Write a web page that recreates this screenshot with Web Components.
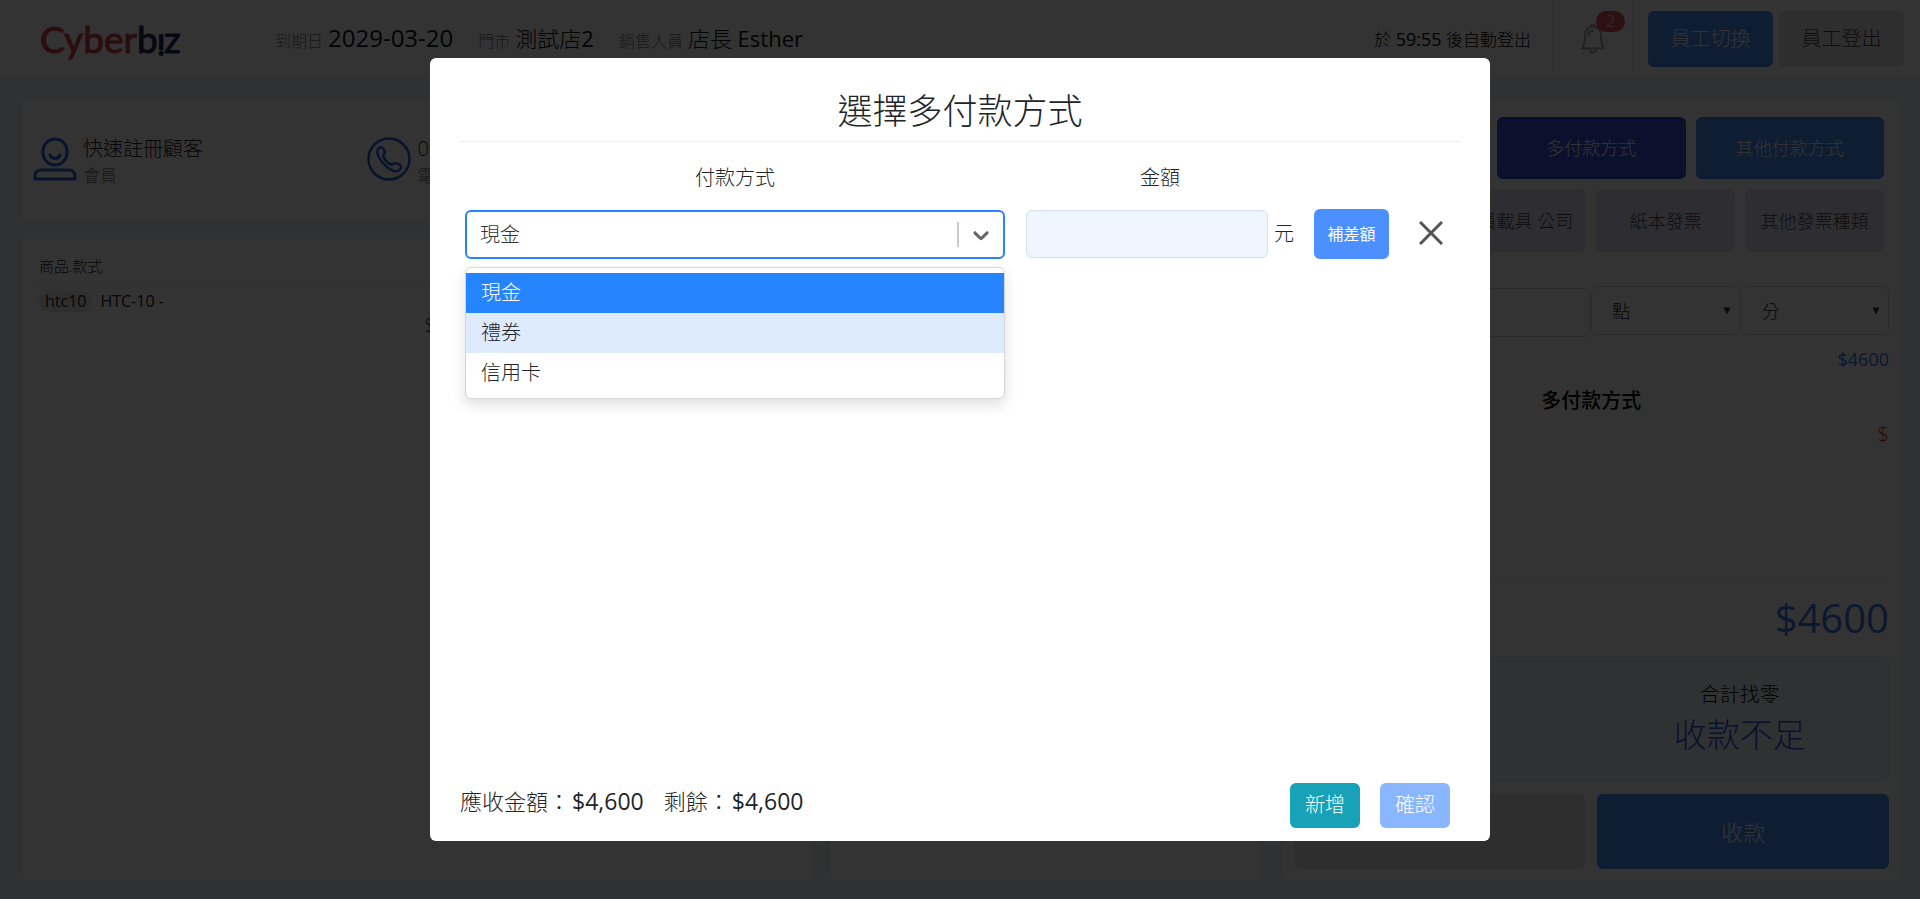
<!DOCTYPE html>
<html lang="zh-Hant">
<head>
<meta charset="utf-8">
<meta name="viewport" content="width=device-width, initial-scale=1">
<title>Cyberbiz POS</title>
<style>
  :root {
    --primary: #4c90ff;
    --ink: #212529;
    --line: #e6e8ea;
    --canvas: #f0f5fb;
  }
  body {
    margin: 0;
    font-family: "Open Sans", "Noto Sans CJK TC", sans-serif;
    font-weight: 300;
    font-size: 20px;
    line-height: 28px;
    color: var(--ink);
    background: var(--canvas);
  }
</style>
</head>
<body>
<pos-app></pos-app>

<script>
const define = (name, css, html) => customElements.define(name, class extends HTMLElement {
  constructor() {
    super();
    this.attachShadow({ mode: 'open' }).innerHTML =
      `<style>*{box-sizing:border-box}button,input,select{font:inherit;color:inherit;margin:0}b{font-weight:400}${css}</style>${html}`;
  }
});

define('pos-logo', `
  :host { display: block; font: 400 37px/40px Lato, sans-serif; color: #d8404c; }
  a { color: inherit; text-decoration: none; display: block; white-space: nowrap; -webkit-text-stroke: 1px currentColor; }
  .b { color: #1d2a5c; }
  .i { display: inline-block; font-size: 26px; line-height: 26px; transform: rotate(180deg); transform-origin: 50% 54%; -webkit-text-stroke: 2px currentColor; }
`, `<a href="#">Cyber<span class="b">b<span class="i">i</span>z</span></a>`);

define('pos-button', `
  :host { display: block; }
  button { display: block; width: 100%; height: 100%; padding: 0; border: 0; border-radius: 6px; cursor: pointer;
    color: var(--fg, #fff); background: var(--bg, var(--primary)); font-size: inherit; line-height: inherit; }
`, `<button type="button"><slot></slot></button>`);

define('pos-field', `
  :host { display: flex; align-items: baseline; gap: 5px; font-size: 22px; white-space: nowrap; }
  .label { font-size: 16px; color: #808080; }
`, `<span class="label"><slot name="label"></slot></span><span><slot></slot></span>`);

define('pos-header', `
  :host { display: flex; height: 79px; background: #fff; align-items: center; border-bottom: 1px solid var(--line); padding-right: 16px; }
  pos-logo { flex: 0 0 auto; width: 275px; padding-left: 40px; }
  .info { display: flex; gap: 25px; flex: 1; color: #0c1014; }
  .info .num { font-size: 24px; line-height: 28px; }
  .timer { font-size: 17px; margin-right: 21px; white-space: nowrap; color: #000; }
  .timer b { font-size: 18px; }
  .bell { position: relative; width: 81px; height: 78px; border: solid var(--line); border-width: 0 1px; display: grid; place-items: center; margin-right: 15px; }
  .badge { position: absolute; top: 11px; right: 7px; width: 29px; height: 21px; border-radius: 11px; background: #e8505a; color: #fff; font-size: 16px; line-height: 21px; text-align: center; }
  pos-button { width: 125px; height: 56px; margin-left: 6px; }
  pos-button.first { margin-left: 0; }
  .grey { --bg: #e4e4e4; --fg: #444; }
`, `
  <pos-logo></pos-logo>
  <div class="info">
    <pos-field><span slot="label">到期日</span><b class="num">2029-03-20</b></pos-field>
    <pos-field><span slot="label">門市</span>測試店<b>2</b></pos-field>
    <pos-field><span slot="label">銷售人員</span>店長 <b>Esther</b></pos-field>
  </div>
  <div class="timer">於 <b>59:55</b> 後自動登出</div>
  <div class="bell">
    <svg width="26" height="30" viewBox="0 0 26 30" fill="none" stroke="#a8a8a8" stroke-width="2" stroke-linecap="round" stroke-linejoin="round">
      <path d="M13 2.500c-4.500 0-8 3.300-8 8.500 0 7-.5 10.500-3 13.500h22c-2.500-3-3-6.500-3-13.500 0-5.200-3.500-8.500-8-8.500z"/>
      <path d="M11 2.500a2 2 0 0 1 4 0M9.500 25a3.500 3.500 0 0 0 7 0M8.500 11.500c0-3 1.500-4.700 4-5"/>
    </svg>
    <span class="badge">2</span>
  </div>
  <pos-button class="first">員工切換</pos-button>
  <pos-button class="grey">員工登出</pos-button>`);

define('pos-card', `
  :host { display: block; background: #fff; border: 1px solid var(--line); border-radius: 6px; box-sizing: border-box; min-width: 0; }
`, `<slot></slot>`);

define('pos-contact', `
  :host { display: flex; gap: 6px; align-items: center; flex: 0 0 27%; min-width: 0; box-sizing: border-box; padding-left: 12px; white-space: nowrap; }
  .text { padding-top: 6px; line-height: 27px; }
  .sub { font-size: 17px; color: #808080; }
`, `<slot name="icon"></slot><div class="text"><div><slot></slot></div><div class="sub"><slot name="sub"></slot></div></div>`);

define('pos-customer', `
  :host { display: flex; height: 100%; align-items: center; box-sizing: border-box; padding-bottom: 4px; }
`, `
  <pos-contact>
    <svg slot="icon" width="44" height="44" viewBox="0 0 44 44" fill="none" stroke="#2c66dc" stroke-width="3" stroke-linecap="round" stroke-linejoin="round">
      <rect x="10" y="2" width="24" height="26" rx="12"/><path d="M17 18c1.500 4.500 8.500 4.500 10 0M2 42v-3c0-4 3-6 6-6h28c3 0 6 2 6 6v3z"/>
    </svg>快速註冊顧客<span slot="sub">會員</span>
  </pos-contact>
  <pos-contact>
    <svg slot="icon" width="44" height="44" viewBox="0 0 44 44" fill="none" stroke="#2c66dc" stroke-width="2.500" stroke-linecap="round" stroke-linejoin="round">
      <circle cx="22" cy="22" r="20.500"/>
      <path d="M11 12c3-3.500 5.500-1 6.500 2 1 2.500-.5 3.500-1.500 4.500 1.500 4.500 4.500 7.500 8.500 9.500 1.500-1.500 3-2.500 5.500-1.500 3 1 5.500 3 3 6-3 3.500-9 1.500-14-3.500-5.500-5-10.500-12.500-8-17z"/>
    </svg>09<span slot="sub">電話</span>
  </pos-contact>`);

define('pos-cart', `
  :host { display: block; padding: 17px 12px; }
  table { width: 100%; border-collapse: collapse; }
  th { text-align: left; font-size: 15px; font-weight: 300; line-height: 20px; padding: 0 0 6px 6px; border-bottom: 1px solid #f0f0f0; height: 28px; }
  td { font-size: 16px; line-height: 21px; padding: 7px 0 0 6px; font-weight: 400; vertical-align: top; }
  .tag { display: inline-block; background: #e8e8e8; border-radius: 11px; padding: 0 6px; margin-right: 8px; }
  .price { font-size: 20px; font-weight: 300; line-height: 28px; padding: 0 0 0 51%; }
`, `
  <table>
    <thead><tr><th>商品.款式</th></tr></thead>
    <tbody><tr><td><span class="tag">htc10</span>HTC-10 -</td></tr><tr><td class="price">$</td></tr></tbody>
  </table>`);

define('pos-checkout', `
  :host { display: flex; flex-direction: column; height: 100%; box-sizing: border-box; padding: 18px 11px 11px 12px; }
  .pay, .invoice { display: grid; gap: 10px; margin: 0 5px; font-size: 18px; }
  .pay { grid-template-columns: repeat(3, 1fr); }
  .pay pos-button { height: 62px; }
  .pay .multi { grid-column: 2; --bg: #3858dc; }
  .invoice { grid-template-columns: repeat(4, 1fr); margin-top: 10px; }
  .invoice pos-button { height: 63px; --bg: #e4e4fa; --fg: #444; white-space: nowrap; }
  .invoice .carrier { grid-column: 2; }
  .time { display: grid; grid-template-columns: 2fr 1fr 1fr; column-gap: 1px; margin-top: 34px; font-size: 18px; align-items: start; }
  .time input, .time select { width: 100%; height: 49px; border: 1px solid #d8d8d8; border-radius: 6px; background: #fff; }
  .time input { margin-top: 2px; }
  .pick { display: grid; align-items: center; }
  .pick > * { grid-area: 1 / 1; }
  select { appearance: none; padding: 0 20px; }
  .pick svg { justify-self: end; margin-right: 9px; }
  .sum { text-align: right; color: #3c78e8; margin-top: 8px; font-size: 18px; font-weight: 400; }
  .name { text-align: center; font-weight: 500; margin-top: 14px; color: #000; }
  .due { text-align: right; color: #d02020; margin-top: 6px; }
  .total { margin-top: auto; border-top: 1px solid var(--line); text-align: right; font-size: 40px; line-height: 76px; color: #3c78e8; font-weight: 400; }
  .change { height: 125px; border: 1px solid #dfe4ec; border-radius: 6px; background: var(--canvas); display: grid; grid-template-columns: 1fr 1fr; align-content: center; text-align: center; }
  .change dl { margin: 0; grid-column: 2; }
  .change dt { line-height: 32px; color: #000; }
  .change dd { margin: 0; font-size: 33px; line-height: 48px; color: #3858dc; }
  .foot { display: grid; grid-template-columns: 1fr 1fr; gap: 12px; margin-top: 13px; font-size: 22px; }
  .foot pos-button { height: 75px; }
  .grey { --bg: #e4e4e4; }
`, `
  <div class="pay"><pos-button class="multi">多付款方式</pos-button><pos-button>其他付款方式</pos-button></div>
  <div class="invoice"><pos-button class="carrier">會員載具 公司</pos-button><pos-button>紙本發票</pos-button><pos-button>其他發票種類</pos-button></div>
  <div class="time">
    <input type="text" aria-label="日期">
    <div class="pick"><select aria-label="點"><option>點</option></select><svg width="8" height="8" viewBox="0 0 8 8"><path d="M0.500 0.500h7L4 7.500z" fill="#333"/></svg></div>
    <div class="pick"><select aria-label="分"><option>分</option></select><svg width="8" height="8" viewBox="0 0 8 8"><path d="M0.500 0.500h7L4 7.500z" fill="#333"/></svg></div>
  </div>
  <div class="sum">$4600</div>
  <div class="name">多付款方式</div>
  <div class="due">$</div>
  <div class="total">$4600</div>
  <div class="change"><dl><dt>合計找零</dt><dd>收款不足</dd></dl></div>
  <div class="foot"><pos-button class="grey" aria-label="取消"></pos-button><pos-button>收款</pos-button></div>`);

define('pos-select', `
  :host { display: block; position: relative; }
  .control { display: grid; grid-template-columns: 1fr auto; align-items: center; }
  select { grid-area: 1 / 1 / 2 / 3; width: 100%; height: 49px; appearance: none; border: 2px solid #2684ff; border-radius: 6px; background: #fff; padding: 0 13px; outline: 0; color: #333; }
  .arrow { grid-area: 1 / 2; display: flex; align-items: center; gap: 9px; padding-right: 11px; pointer-events: none; }
  .arrow::before { content: ""; width: 2px; height: 25px; background: #ccc; }
  ul { position: absolute; top: 57px; left: 0; right: 0; margin: 0; padding: 5px 0; list-style: none; background: #fff; border: 1px solid #d6d6d6; border-radius: 6px; box-shadow: 0 6px 14px rgba(0,0,0,.13); z-index: 1; }
  li { height: 40px; line-height: 40px; padding: 0 15px; }
  .selected { background: #2684ff; color: #fff; }
  .hover { background: #deebff; }
`, `
  <div class="control">
    <select aria-label="付款方式"><option>現金</option></select>
    <span class="arrow"><svg width="26" height="26" viewBox="0 0 20 20" fill="#666"><path d="M4.516 7.548c0.436-0.446 1.043-0.481 1.576 0l3.908 3.747 3.908-3.747c0.533-0.481 1.141-0.446 1.574 0 0.436 0.445 0.408 1.197 0 1.615-0.406 0.418-4.695 4.502-4.695 4.502-0.217 0.223-0.502 0.335-0.787 0.335s-0.570-0.112-0.789-0.335c0 0-4.287-4.084-4.695-4.502s-0.436-1.170 0-1.615z"/></svg></span>
  </div>
  <ul role="listbox">
    <li class="selected" role="option" aria-selected="true">現金</li>
    <li class="hover" role="option">禮券</li>
    <li role="option">信用卡</li>
  </ul>`);

define('pos-dialog', `
  :host { position: fixed; inset: 0; display: grid; place-items: center; background: rgba(0,0,0,.8); z-index: 10; }
  section { width: calc(50vw + 100px); min-height: 87vh; background: #fff; border-radius: 6px; display: flex; flex-direction: column; padding: 31px 30px 13px; }
  h1 { margin: 0; font-size: 35px; font-weight: 300; line-height: 44px; text-align: center; padding-bottom: 8px; border-bottom: 1px solid #eee; }
  .grid { display: grid; grid-template-columns: minmax(0, 11fr) minmax(0, 6fr) minmax(0, 3fr); row-gap: 15px; padding-top: 20px; }
  .head { line-height: 32px; text-align: center; }
  pos-select { margin: 1px 5px 0; }
  .amount { display: flex; align-items: center; gap: 6px; padding: 0 16px; }
  .amount input { flex: 1; min-width: 0; height: 48px; border: 1px solid #d6e0f2; border-radius: 6px; background: #f0f6ff; padding: 0 12px; }
  .actions { display: flex; align-items: center; padding-left: 4px; gap: 30px; }
  .fill { width: 75px; height: 50px; font-size: 16px; font-weight: 400; }
  .close { border: 0; background: none; padding: 0; width: 24px; height: 24px; margin-bottom: 3px; }
  .close svg { display: block; }
  footer { margin-top: auto; display: flex; align-items: flex-start; gap: 20px; padding-right: 10px; }
  footer p { margin: 0; font-size: 22px; line-height: 36px; }
  footer p b { font-size: 23px; margin-left: 2px; }
  .push { margin-right: auto; }
  footer pos-button { width: 70px; height: 45px; }
  .add { --bg: #17a2b8; }
  .ok { --bg: #8ab5ff; }
`, `
  <section role="dialog" aria-modal="true" aria-labelledby="t">
    <h1 id="t">選擇多付款方式</h1>
    <div class="grid">
      <div class="head">付款方式</div>
      <label class="head" for="amt">金額</label>
      <span></span>
      <pos-select></pos-select>
      <div class="amount"><input id="amt" type="text"><span>元</span></div>
      <div class="actions">
        <pos-button class="fill">補差額</pos-button>
        <button class="close" type="button" aria-label="刪除"><svg width="24" height="24" viewBox="0 0 24 24" stroke="#555" stroke-width="3"><path d="M1 1l22 22M23 1L1 23"/></svg></button>
      </div>
    </div>
    <footer>
      <p>應收金額：<b>$4,600</b></p>
      <p class="push">剩餘：<b>$4,600</b></p>
      <pos-button class="add">新增</pos-button>
      <pos-button class="ok">確認</pos-button>
    </footer>
  </section>`);

define('pos-app', `
  :host { display: flex; flex-direction: column; min-height: 100vh; }
  main { flex: 1; display: grid; grid-template-columns: 2fr 1fr; gap: 20px; padding: 19px 19px 18px 20px; }
  .left { display: grid; grid-template-columns: 11fr 6fr; grid-template-rows: 125px 1fr; gap: 14px; }
  .top { grid-column: 1 / 3; }
`, `
  <pos-header></pos-header>
  <main>
    <div class="left">
      <pos-card class="top"><pos-customer></pos-customer></pos-card>
      <pos-card><pos-cart></pos-cart></pos-card>
      <pos-card></pos-card>
    </div>
    <pos-card><pos-checkout></pos-checkout></pos-card>
  </main>
  <pos-dialog></pos-dialog>`);
</script>
</body>
</html>
